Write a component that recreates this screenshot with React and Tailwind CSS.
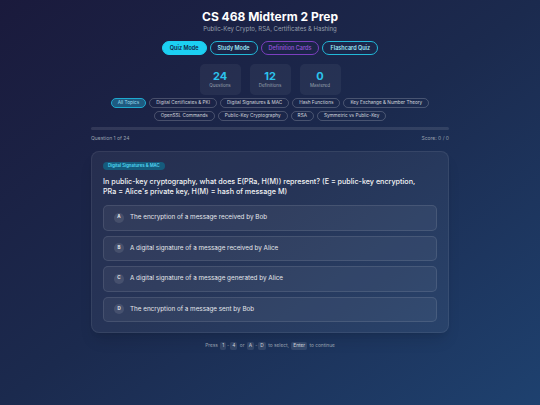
import React from 'react'

const modes = [
  { label: 'Quiz Mode', cls: 'bg-[#1ccff2] border-[#1ccff2] text-[#0f2444]' },
  { label: 'Study Mode', cls: 'border-[#22b8d8] text-[#9ee6f5]' },
  { label: 'Definition Cards', cls: 'border-[#7b3fbf] text-[#8e4fd0]' },
  { label: 'Flashcard Quiz', cls: 'border-[#22b8d8] text-[#9ee6f5]' },
]

const stats = [
  { n: '24', l: 'Questions' },
  { n: '12', l: 'Definitions' },
  { n: '0', l: 'Mastered' },
]

const topics = [
  'All Topics',
  'Digital Certificates & PKI',
  'Digital Signatures & MAC',
  'Hash Functions',
  'Key Exchange & Number Theory',
  'OpenSSL Commands',
  'Public-Key Cryptography',
  'RSA',
  'Symmetric vs Public-Key',
]

const options = [
  { k: 'A', t: 'The encryption of a message received by Bob' },
  { k: 'B', t: 'A digital signature of a message received by Alice' },
  { k: 'C', t: 'A digital signature of a message generated by Alice' },
  { k: 'D', t: 'The encryption of a message sent by Bob' },
]

function Kbd({ children }) {
  return (
    <span className="inline-flex items-center h-[8px] px-[2px] mx-[1px] rounded-[2px] bg-white/10 text-gray-300">
      {children}
    </span>
  )
}

export default function App() {
  return (
    <div
      className="w-[540px] h-[405px] overflow-hidden bg-gradient-to-br from-[#1a1a3c] via-[#1b2a4e] to-[#1e416f] text-white"
      style={{ fontFamily: 'Inter, "Noto Sans", sans-serif' }}
    >
      <div className="w-[358px] mx-auto pt-[9px]">
        <h1 className="text-center text-[12px] leading-[15px] font-bold">CS 468 Midterm 2 Prep</h1>
        <p className="text-center text-[6px] leading-[8px] text-gray-400 mt-[1px]">
          Public-Key Crypto, RSA, Certificates &amp; Hashing
        </p>

        <div className="flex justify-center gap-[3px] mt-[8px]">
          {modes.map((m) => (
            <div
              key={m.label}
              className={'h-[14px] px-[7px] rounded-full border flex items-center text-[5.5px] font-semibold ' + m.cls}
            >
              {m.label}
            </div>
          ))}
        </div>

        <div className="flex justify-center gap-[9px] mt-[9px]">
          {stats.map((s) => (
            <div key={s.l} className="w-[41px] h-[31px] rounded-[5px] bg-white/5 flex flex-col items-center justify-center">
              <div className="text-[11px] leading-[12px] font-bold text-[#2cc3ec]">{s.n}</div>
              <div className="text-[4.5px] leading-[6px] text-gray-400 mt-[1px]">{s.l}</div>
            </div>
          ))}
        </div>

        <div className="flex flex-wrap justify-center gap-x-[3px] gap-y-[3px] mt-[3px]">
          {topics.map((t, i) => (
            <div
              key={t}
              className={
                'h-[10px] px-[6px] rounded-full border flex items-center text-[4.7px] ' +
                (i === 0
                  ? 'border-[#1ea9cf] bg-[#1e5a80] text-[#9fdff2]'
                  : 'border-white/20 text-gray-300')
              }
            >
              {t}
            </div>
          ))}
        </div>

        <div className="h-[3px] rounded-full bg-white/10 mt-[6px]" />
        <div className="flex justify-between text-[5px] leading-[7px] text-gray-400 mt-[5px]">
          <span>Question 1 of 24</span>
          <span>Score: 0 / 0</span>
        </div>

        <div className="mt-[9px] rounded-[8px] bg-white/[0.05] border border-white/[0.07] shadow-lg px-[11px] pt-[10px] pb-[10px]">
          <div className="flex">
            <span className="flex items-center h-[8px] px-[5px] rounded-full bg-[#155b7c] text-[4.3px] font-semibold text-[#52d4f2]">
              Digital Signatures &amp; MAC
            </span>
          </div>
          <p className="text-[7.2px] leading-[10px] font-medium text-gray-100 mt-[7px]">
            In public-key cryptography, what does E(PRa, H(M)) represent? (E = public-key encryption,
            <br />
            PRa = Alice's private key, H(M) = hash of message M)
          </p>
          <div className="flex flex-col gap-[5px] mt-[8px]">
            {options.map((o) => (
              <div
                key={o.k}
                className="h-[25.5px] rounded-[5px] border border-white/10 bg-white/[0.05] flex items-center pl-[10px] gap-[6px]"
              >
                <span className="w-[10px] h-[10px] rounded-full bg-white/10 flex items-center justify-center text-[4.5px] font-bold text-gray-200">
                  {o.k}
                </span>
                <span className="text-[6.3px] text-gray-200">{o.t}</span>
              </div>
            ))}
          </div>
        </div>

        <div className="flex justify-center items-center text-[4.8px] text-gray-400 mt-[9px]">
          Press&nbsp;<Kbd>1</Kbd>-<Kbd>4</Kbd>&nbsp;or&nbsp;<Kbd>A</Kbd>-<Kbd>D</Kbd>&nbsp;to select,&nbsp;<Kbd>Enter</Kbd>&nbsp;to continue
        </div>
      </div>
    </div>
  )
}
